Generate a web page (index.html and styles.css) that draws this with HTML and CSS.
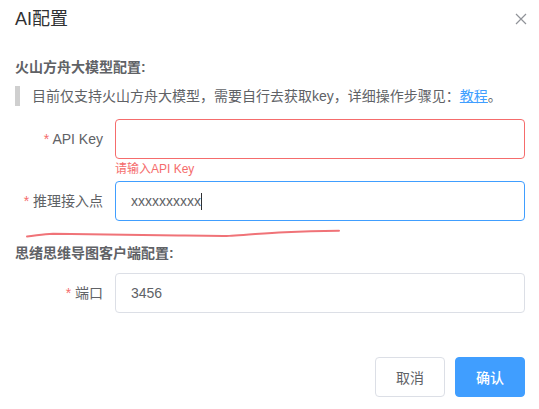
FILE: index.html
```html
<!DOCTYPE html>
<html lang="zh-CN">
<head>
<meta charset="utf-8">
<title>AI配置</title>
<link rel="stylesheet" href="styles.css">
</head>
<body>
<div class="dialog">
  <div class="dialog-header">
    <span class="dialog-title">AI配置</span>
    <button class="close-btn" aria-label="关闭">
      <svg width="12" height="12" viewBox="0 0 12 12"><path d="M1 1L11 11M11 1L1 11" stroke="#909399" stroke-width="1.2" fill="none"/></svg>
    </button>
  </div>
  <div class="dialog-body">
    <div class="section-title">火山方舟大模型配置:</div>
    <div class="tip">目前仅支持火山方舟大模型，需要自行去获取key，详细操作步骤见：<a class="link" href="#">教程</a>。</div>
    <div class="form-item">
      <label class="form-label"><span class="req">*</span> API Key</label>
      <div class="form-content">
        <div class="input is-error"></div>
        <div class="error-msg">请输入API Key</div>
      </div>
    </div>
    <div class="form-item">
      <label class="form-label"><span class="req">*</span> 推理接入点</label>
      <div class="form-content">
        <div class="input is-focus"><span class="val">xxxxxxxxxx</span><span class="caret"></span></div>
      </div>
    </div>
    <div class="section-title second">思绪思维导图客户端配置:</div>
    <div class="form-item">
      <label class="form-label"><span class="req">*</span> 端口</label>
      <div class="form-content">
        <div class="input"><span class="val">3456</span></div>
      </div>
    </div>
  </div>
  <div class="dialog-footer">
    <button class="btn">取消</button>
    <button class="btn btn-primary">确认</button>
  </div>
  <svg class="scribble" width="330" height="14" viewBox="0 0 330 14"><path d="M2 11.5 C 12 10.5, 18 9, 28 8.8 S 100 10, 160 10.5 S 195 11.2, 210 10.5 S 240 8, 260 7.2 S 300 6, 314 5.8" stroke="#f07378" stroke-width="2" fill="none" stroke-linecap="round"/></svg>
</div>
</body>
</html>
```
FILE: styles.css
```css
* { box-sizing: border-box; }
html, body { margin: 0; padding: 0; background: #fff; }
body {
  font-family: "Liberation Sans", "Noto Sans CJK SC", sans-serif;
  color: #606266;
  font-size: 14px;
}
.dialog {
  width: 539px;
  height: 409px;
  padding: 0 14px 0 15px;
  position: relative;
}
.dialog-header {
  height: 40px;
  padding-top: 7px;
  display: flex;
  justify-content: space-between;
  align-items: flex-start;
}
.dialog-title {
  font-size: 18px;
  line-height: 24px;
  color: #303133;
}
.close-btn {
  border: none;
  background: none;
  padding: 0;
  margin: 5px -3px 0 0;
  width: 14px;
  height: 14px;
  display: flex;
  align-items: center;
  justify-content: center;
}
.dialog-body { padding-top: 17px; }
.section-title {
  font-weight: bold;
  font-size: 14px;
  line-height: 20px;
  color: #606266;
}
.section-title.second { margin-top: 1px; margin-bottom: 10px; }
.tip {
  margin-top: 9px;
  margin-bottom: 13px;
  border-left: 5px solid #cfcfcf;
  padding-left: 12px;
  line-height: 20px;
  color: #606266;
}
.link { color: #409eff; text-decoration: underline; }
.form-item {
  display: flex;
  margin-bottom: 22px;
}
.form-label {
  width: 100px;
  flex: none;
  text-align: right;
  padding-right: 12px;
  line-height: 40px;
  color: #606266;
}
.req { color: #f56c6c; }
.form-content { flex: 1; position: relative; }
.input {
  height: 40px;
  border: 1px solid #dcdfe6;
  border-radius: 4px;
  padding: 0 15px;
  display: flex;
  align-items: center;
  color: #606266;
  font-size: 14px;
}
.input.is-error { border-color: #f56c6c; }
.input.is-focus { border-color: #409eff; }
.caret {
  display: inline-block;
  width: 1px;
  height: 17px;
  background: #303133;
}
.error-msg {
  position: absolute;
  top: 100%;
  left: 0;
  padding-top: 4px;
  font-size: 12px;
  line-height: 1;
  color: #f56c6c;
}
.scribble {
  position: absolute;
  left: 25px;
  top: 225px;
}
.dialog-footer {
  display: flex;
  justify-content: flex-end;
  gap: 10px;
  padding-top: 22px;
}
.btn {
  width: 70px;
  height: 40px;
  border: 1px solid #dcdfe6;
  border-radius: 4px;
  background: #fff;
  color: #606266;
  font-family: inherit;
  font-size: 14px;
  font-weight: 400;
  padding: 0;
}
.btn-primary {
  background: #409eff;
  border-color: #409eff;
  color: #fff;
  font-weight: 500;
}
```
